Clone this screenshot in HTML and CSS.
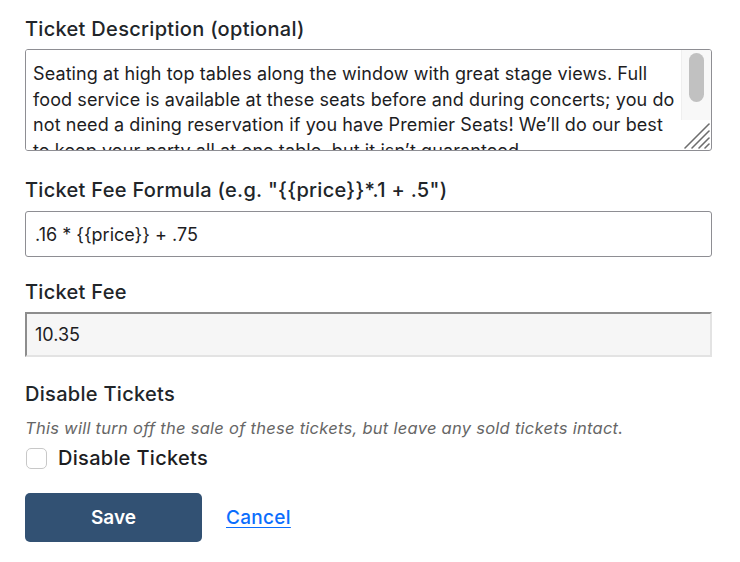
FILE: index.html
```html
<!DOCTYPE html>
<html>
<head>
<meta charset="utf-8">
<link rel="stylesheet" href="styles.css">
</head>
<body>
<form class="form">
  <div class="field field-desc">
    <label class="label" for="desc">Ticket Description (optional)</label>
    <div class="textarea-wrap">
      <textarea id="desc" class="textarea">Seating at high top tables along the window with great stage views. Full food service is available at these seats before and during concerts; you do not need a dining reservation if you have Premier Seats! We’ll do our best to keep your party all at one table, but it isn’t guaranteed.</textarea>
      <div class="scrollbar">
        <div class="scroll-track"><div class="scroll-thumb"></div></div>
        <div class="scroll-grip">
          <svg width="30" height="30" viewBox="0 0 30 30">
            <g stroke="#6e6e6e" stroke-width="1.6" stroke-linecap="round">
              <line x1="4" y1="28" x2="28" y2="4"/>
              <line x1="11" y1="28" x2="28" y2="11"/>
              <line x1="18" y1="28" x2="28" y2="18"/>
              <line x1="24" y1="28" x2="28" y2="24"/>
            </g>
          </svg>
        </div>
      </div>
    </div>
  </div>
  <div class="field field-formula">
    <label class="label" for="formula">Ticket Fee Formula (e.g. "{{price}}*.1 + .5")</label>
    <input id="formula" class="input" type="text" value=".16 * {{price}} + .75">
  </div>
  <div class="field field-fee">
    <label class="label" for="fee">Ticket Fee</label>
    <input id="fee" class="input input-readonly" type="text" value="10.35" readonly>
  </div>
  <div class="field field-disable">
    <div class="label">Disable Tickets</div>
    <p class="help">This will turn off the sale of these tickets, but leave any sold tickets intact.</p>
    <label class="check">
      <span class="check-box"></span>
      <span class="check-text">Disable Tickets</span>
    </label>
  </div>
  <div class="actions">
    <button type="button" class="btn-save">Save</button>
    <a class="cancel" href="#">Cancel</a>
  </div>
</form>
</body>
</html>
```

FILE: styles.css
```css
html, body {
  margin: 0;
  padding: 0;
  background: #ffffff;
}
body {
  font-family: Inter, "Noto Sans", sans-serif;
  color: #212529;
}
.form {
  display: flex;
  flex-direction: column;
  width: 687px;
  padding: 17px 0 0 25px;
}
.field {
  display: flex;
  flex-direction: column;
}
.label {
  font-size: 20px;
  line-height: 24px;
  font-weight: 500;
  letter-spacing: 0.3px;
  color: #212529;
  margin-bottom: 8px;
}
.field-formula { margin-top: 27px; }
.field-formula .label { margin-bottom: 9px; }
.field-fee { margin-top: 23px; }
.field-disable { margin-top: 25px; }
.field-disable .label { margin-bottom: 0; }

.textarea-wrap {
  box-sizing: border-box;
  display: flex;
  height: 102px;
  width: 100%;
  border: 1px solid #8e8e93;
  border-radius: 3px;
  overflow: hidden;
  background: #fff;
}
.textarea {
  flex: 1;
  box-sizing: border-box;
  height: 100%;
  margin: 0;
  border: none;
  padding: 11px 0 0 7px;
  font-family: Inter, "Noto Sans", sans-serif;
  font-size: 18px;
  line-height: 25.5px;
  letter-spacing: 0.1px;
  color: #1d1d1f;
  background: #fff;
  overflow: hidden;
  resize: none;
  outline: none;
}
.scrollbar {
  width: 30px;
  display: flex;
  flex-direction: column;
}
.scroll-track {
  flex: 1;
  background: #f8f8f8;
  border-left: 1px solid #efefef;
  display: flex;
  justify-content: center;
  padding-top: 3px;
}
.scroll-thumb {
  width: 15px;
  height: 49px;
  border-radius: 8px;
  background: #c1c1c1;
}
.scroll-grip {
  height: 30px;
  display: flex;
}

.input {
  box-sizing: border-box;
  width: 100%;
  height: 46px;
  margin: 0;
  border: 1px solid #8e8e93;
  border-radius: 3px;
  padding: 0 9px;
  font-family: Inter, "Noto Sans", sans-serif;
  font-size: 18px;
  color: #1d1d1f;
  background: #fff;
  outline: none;
}
.input-readonly {
  height: 45px;
  border-radius: 0;
  border-style: solid;
  border-width: 2px;
  border-color: #8d8d8d #e3e3e3 #e3e3e3 #8d8d8d;
  background: #f6f6f6;
  padding: 0 8px;
}

.help {
  margin: 12px 0 0 0;
  font-size: 16.5px;
  line-height: 20px;
  letter-spacing: 0.27px;
  font-style: italic;
  color: #666666;
}
.check {
  display: flex;
  align-items: center;
  gap: 11px;
  margin-top: 8px;
  height: 24px;
}
.check-box {
  box-sizing: border-box;
  width: 21px;
  height: 21px;
  border: 1px solid #c8c8c8;
  border-radius: 5px;
  background: #fff;
  margin-left: 1px;
}
.check-text {
  font-size: 20px;
  font-weight: 500;
  line-height: 24px;
  letter-spacing: 0.3px;
  color: #1d1d1f;
}

.actions {
  display: flex;
  align-items: center;
  gap: 24px;
  margin-top: 23px;
}
.btn-save {
  width: 177px;
  height: 49px;
  border: none;
  border-radius: 5px;
  background: #325173;
  color: #ffffff;
  font-family: Inter, "Noto Sans", sans-serif;
  font-size: 19px;
  font-weight: 600;
  padding: 0;
}
.cancel {
  font-size: 19px;
  font-weight: 500;
  letter-spacing: 0.3px;
  color: #0b6efd;
  text-decoration: underline;
  text-underline-offset: 3px;
}
```
